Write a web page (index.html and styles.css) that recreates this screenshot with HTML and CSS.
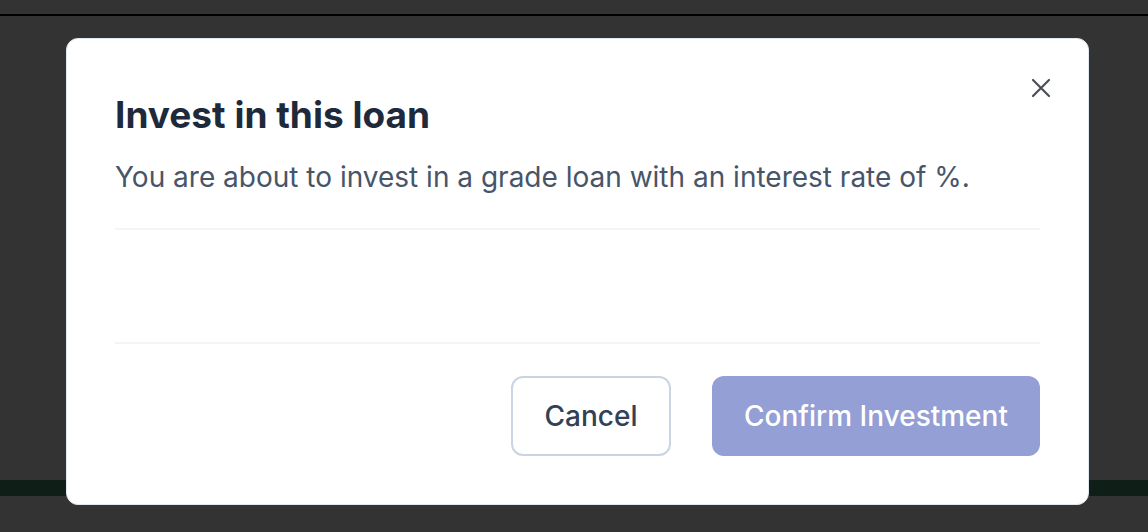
FILE: index.html
```html
<!DOCTYPE html>
<html>
<head>
<meta charset="utf-8">
<link rel="stylesheet" href="styles.css">
</head>
<body>
<div class="page">
  <div class="topline"></div>
  <div class="spacer"></div>
  <div class="band"></div>
</div>
<div class="modal" role="dialog">
  <button class="close" aria-label="Close">
    <svg width="20" height="20" viewBox="0 0 20 20"><path d="M2 2L18 18M18 2L2 18" stroke="#4b4f55" stroke-width="2.2" stroke-linecap="round" fill="none"/></svg>
  </button>
  <div class="header">
    <h2 class="title">Invest in this loan</h2>
    <p class="subtitle">You are about to invest in a grade loan with an interest rate of %.</p>
  </div>
  <div class="body"></div>
  <div class="footer">
    <button class="btn btn-cancel">Cancel</button>
    <button class="btn btn-confirm">Confirm Investment</button>
  </div>
</div>
</body>
</html>
```
FILE: styles.css
```css
html, body {
  margin: 0;
  padding: 0;
  width: 1148px;
  height: 532px;
  overflow: hidden;
  background: #333333;
  font-family: Inter, "Liberation Sans", sans-serif;
}
.page {
  display: flex;
  flex-direction: column;
  height: 532px;
}
.topline {
  margin-top: 14px;
  height: 2px;
  background: #000000;
}
.spacer {
  height: 464px;
}
.band {
  height: 16px;
  background: #0f1f17;
}
.modal {
  position: absolute;
  left: 66px;
  top: 38px;
  width: 1023px;
  height: 467px;
  box-sizing: border-box;
  background: #ffffff;
  border: 1px solid #e2e8f0;
  border-radius: 12px;
  padding: 0 48px;
  display: flex;
  flex-direction: column;
}
.close {
  position: absolute;
  top: 39px;
  right: 37px;
  width: 20px;
  height: 20px;
  padding: 0;
  border: none;
  background: none;
}
.close svg { display: block; }
.header {
  padding-top: 54px;
  padding-bottom: 33px;
  border-bottom: 2px solid #f1f5f9;
}
.title {
  margin: 0;
  font-size: 37px;
  line-height: 44px;
  font-weight: 700;
  color: #1e293b;
}
.subtitle {
  margin: 22px 0 0;
  font-size: 28px;
  line-height: 36px;
  color: #475569;
}
.body {
  height: 112px;
  border-bottom: 2px solid #f1f5f9;
}
.footer {
  display: flex;
  justify-content: flex-end;
  gap: 41px;
  padding-top: 32px;
}
.btn {
  height: 80px;
  border-radius: 12px;
  font-family: Inter, "Liberation Sans", sans-serif;
  font-size: 28px;
  font-weight: 500;
  box-sizing: border-box;
}
.btn-cancel {
  width: 160px;
  background: #ffffff;
  border: 2px solid #cbd5e1;
  color: #334155;
}
.btn-confirm {
  width: 328px;
  background: #939fd5;
  border: none;
  color: #ffffff;
}
```
